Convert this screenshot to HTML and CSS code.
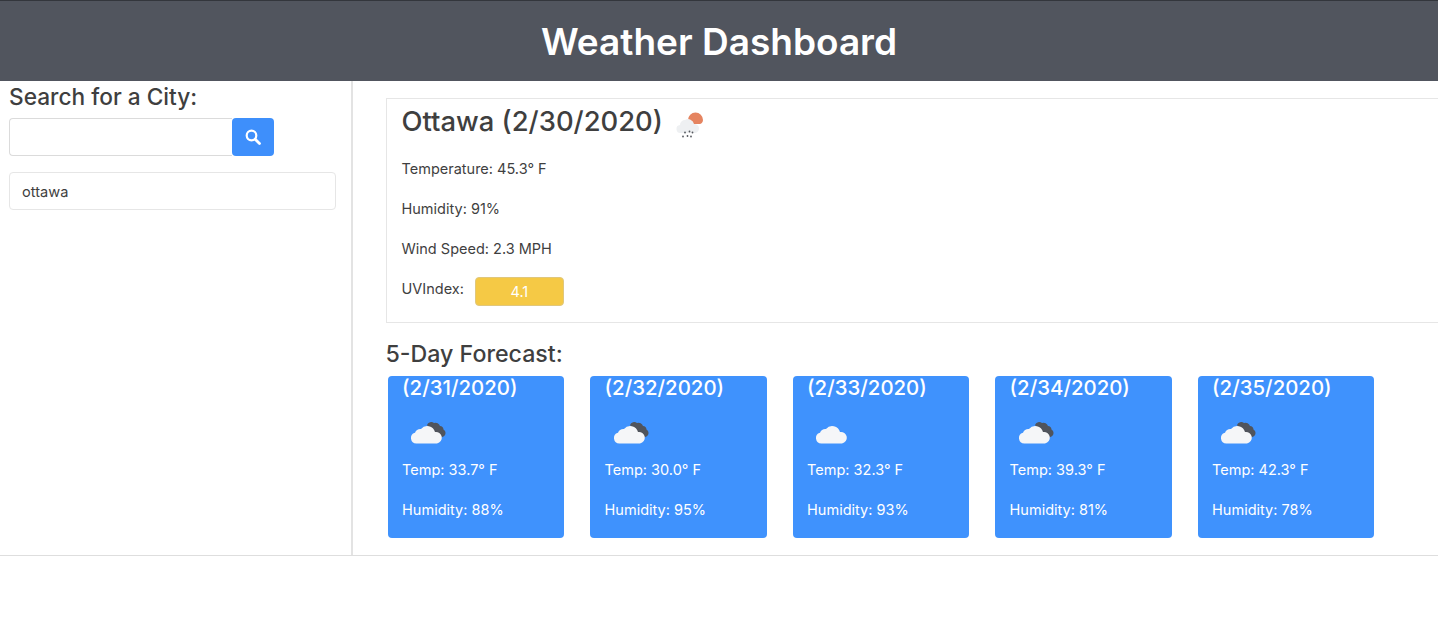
FILE: index.html

```html
<!DOCTYPE html>
<html lang="en">
<head>
  <meta charset="UTF-8" />
  <meta name="viewport" content="width=device-width, initial-scale=1.0"/>
  <title>Weather Dashboard</title>
  <link rel="stylesheet" href="styles.css">
</head>
<body>
  <svg class="defs" width="0" height="0" aria-hidden="true">
    <symbol id="cloud" viewBox="0 0 36 24">
      <path fill="#f5f6f8" d="M6.500 23.500a5.500 5.500 0 0 1-1.500-10.800 6 6 0 0 1 6-3.700 8 8 0 0 1 14 3 5.500 5.500 0 0 1 2 11.500z"/>
    </symbol>
    <symbol id="cloud-dark" viewBox="0 0 36 24">
      <path fill="#50545c" d="M17 5a4.500 4.500 0 0 1 7-2 4.500 4.500 0 0 1 6 3 4 4 0 0 1 3.500 3.500 4 4 0 0 1 0 7L27 19z"/>
      <path fill="#f5f6f8" d="M6.500 23.500a5.500 5.500 0 0 1-1.500-10.800 6 6 0 0 1 6-3.700 8 8 0 0 1 14 3 5.500 5.500 0 0 1 2 11.500z"/>
    </symbol>
  </svg>

  <header class="top-bar">
    <h1>Weather Dashboard</h1>
  </header>

  <div class="layout">
    <aside class="sidebar">
      <h2 class="side-title">Search for a City:</h2>
      <div class="search-row">
        <input class="search-input" type="text" />
        <button class="search-btn" aria-label="Search">
          <svg width="16" height="16" viewBox="0 0 16 16">
            <circle cx="6.500" cy="6.500" r="4.800" fill="none" stroke="#fff" stroke-width="2.200"/>
            <path d="M10.200 10.200l4.300 4.300" stroke="#fff" stroke-width="2.800" stroke-linecap="round"/>
          </svg>
        </button>
      </div>
      <ul class="city-list">
        <li>ottawa</li>
      </ul>
    </aside>

    <main class="content">
      <section class="today">
        <h2 class="today-title">Ottawa (2/30/2020)
          <svg class="today-icon" width="30" height="30" viewBox="0 0 30 30">
            <path fill="#e58460" d="M12 11a7.500 7.500 0 0 1 15 0c0 2-1.500 4-3.500 4H15z"/>
            <path fill="#eef0f2" d="M5 24a4 4 0 0 1-1-8 5 5 0 0 1 5-5 6 6 0 0 1 9 4 4.500 4.500 0 0 1 1 9z"/>
            <g fill="#55585e">
              <circle cx="9" cy="23.500" r=".9"/><circle cx="13.500" cy="22.500" r=".9"/><circle cx="16.500" cy="23.500" r=".9"/>
              <circle cx="7" cy="27.500" r=".9"/><circle cx="11.500" cy="27" r=".9"/><circle cx="15" cy="27.500" r=".9"/>
            </g>
          </svg>
        </h2>
        <p>Temperature: 45.3° F</p>
        <p>Humidity: 91%</p>
        <p>Wind Speed: 2.3 MPH</p>
        <p class="uv-line">UVIndex: <span class="uv-badge">4.1</span></p>
      </section>

      <h2 class="forecast-title">5-Day Forecast:</h2>
      <div class="forecast">
        <div class="day-card">
          <h3>(2/31/2020)</h3>
          <svg class="day-icon"><use href="#cloud-dark"/></svg>
          <p>Temp: 33.7° F</p>
          <p>Humidity: 88%</p>
        </div>
        <div class="day-card">
          <h3>(2/32/2020)</h3>
          <svg class="day-icon"><use href="#cloud-dark"/></svg>
          <p>Temp: 30.0° F</p>
          <p>Humidity: 95%</p>
        </div>
        <div class="day-card">
          <h3>(2/33/2020)</h3>
          <svg class="day-icon"><use href="#cloud"/></svg>
          <p>Temp: 32.3° F</p>
          <p>Humidity: 93%</p>
        </div>
        <div class="day-card">
          <h3>(2/34/2020)</h3>
          <svg class="day-icon"><use href="#cloud-dark"/></svg>
          <p>Temp: 39.3° F</p>
          <p>Humidity: 81%</p>
        </div>
        <div class="day-card">
          <h3>(2/35/2020)</h3>
          <svg class="day-icon"><use href="#cloud-dark"/></svg>
          <p>Temp: 42.3° F</p>
          <p>Humidity: 78%</p>
        </div>
      </div>
    </main>
  </div>
</body>
</html>
```

FILE: styles.css

```css
html, body {
  margin: 0;
  height: 630px;
  overflow: hidden;
}
body {
  font-family: Inter, "Liberation Sans", sans-serif;
  font-size: 16px;
  color: #3f3f3f;
  background-color: #fff;
}
h1, h2, h3, p, ul {
  margin: 0;
  padding: 0;
}
.defs {
  display: block;
  height: 0;
}
.top-bar {
  height: 81px;
  box-sizing: border-box;
  border-top: 1px solid #33363c;
  padding-top: 1px;
  background-color: #51555e;
  display: flex;
  align-items: center;
  justify-content: center;
}
.top-bar h1 {
  font-size: 37px;
  font-weight: 600;
  color: #fff;
}
.layout {
  display: flex;
  height: 475px;
  box-sizing: border-box;
  border-bottom: 1px solid #dedede;
}
.sidebar {
  width: 353px;
  box-sizing: border-box;
  border-right: 2px solid #e3e3e3;
  padding: 2px 15px 0 9px;
}
.side-title {
  font-size: 22.7px;
  font-weight: 500;
  line-height: 27px;
}
.search-row {
  display: flex;
  margin-top: 8px;
}
.search-input {
  width: 223px;
  height: 38px;
  box-sizing: border-box;
  border: 1px solid #dbdbdb;
  border-right: none;
  border-radius: 4px 0 0 4px;
}
.search-btn {
  width: 42px;
  height: 38px;
  padding: 0;
  border: none;
  border-radius: 4px;
  background-color: #3e8ffb;
  display: flex;
  align-items: center;
  justify-content: center;
}
.city-list {
  list-style: none;
  margin-top: 16px;
}
.city-list li {
  height: 38px;
  box-sizing: border-box;
  border: 1px solid #e6e6e6;
  border-radius: 4px;
  padding-left: 12px;
  line-height: 38px;
  font-size: 14.6px;
}
.content {
  flex: 1;
  padding: 17px 0 0 33px;
  min-width: 0;
}
.today {
  height: 225px;
  width: 1100px;
  box-sizing: border-box;
  border: 1px solid #e6e6e6;
  padding: 6px 15px 0 14.500px;
}
.today-title {
  height: 32px;
  font-size: 27.4px;
  font-weight: 500;
  line-height: 32px;
  display: flex;
  align-items: center;
  gap: 13px;
  margin-bottom: 22px;
}
.today-icon {
  margin-top: 5px;
}
.today p {
  font-size: 14.5px;
  line-height: 20px;
  margin-bottom: 20px;
}
.today .uv-line {
  display: flex;
  align-items: flex-start;
  gap: 11px;
}
.uv-badge {
  width: 89px;
  height: 29px;
  margin-top: -2px;
  box-sizing: border-box;
  border: 1px solid #e0c77c;
  border-radius: 4px;
  background-color: #f5c945;
  color: #fff;
  text-align: center;
  line-height: 28px;
}
.forecast-title {
  margin-top: 18px;
  margin-left: -0.500px;
  font-size: 23.2px;
  font-weight: 500;
  line-height: 27px;
}
.forecast {
  display: flex;
  gap: 26px;
  margin-top: 8px;
  padding-left: 1.600px;
}
.day-card {
  width: 176.500px;
  height: 162px;
  box-sizing: border-box;
  padding: 0 14.500px;
  border-radius: 4px;
  background-color: #3f92fd;
  color: #fff;
}
.day-card h3 {
  font-size: 20.4px;
  font-weight: 500;
  line-height: 24px;
}
.day-icon {
  display: block;
  width: 36px;
  height: 24px;
  margin: 20px 0 0 8px;
}
.day-card p {
  font-size: 14.5px;
  line-height: 20px;
  margin-top: 20px;
}
.day-icon + p {
  margin-top: 16px;
}
```
